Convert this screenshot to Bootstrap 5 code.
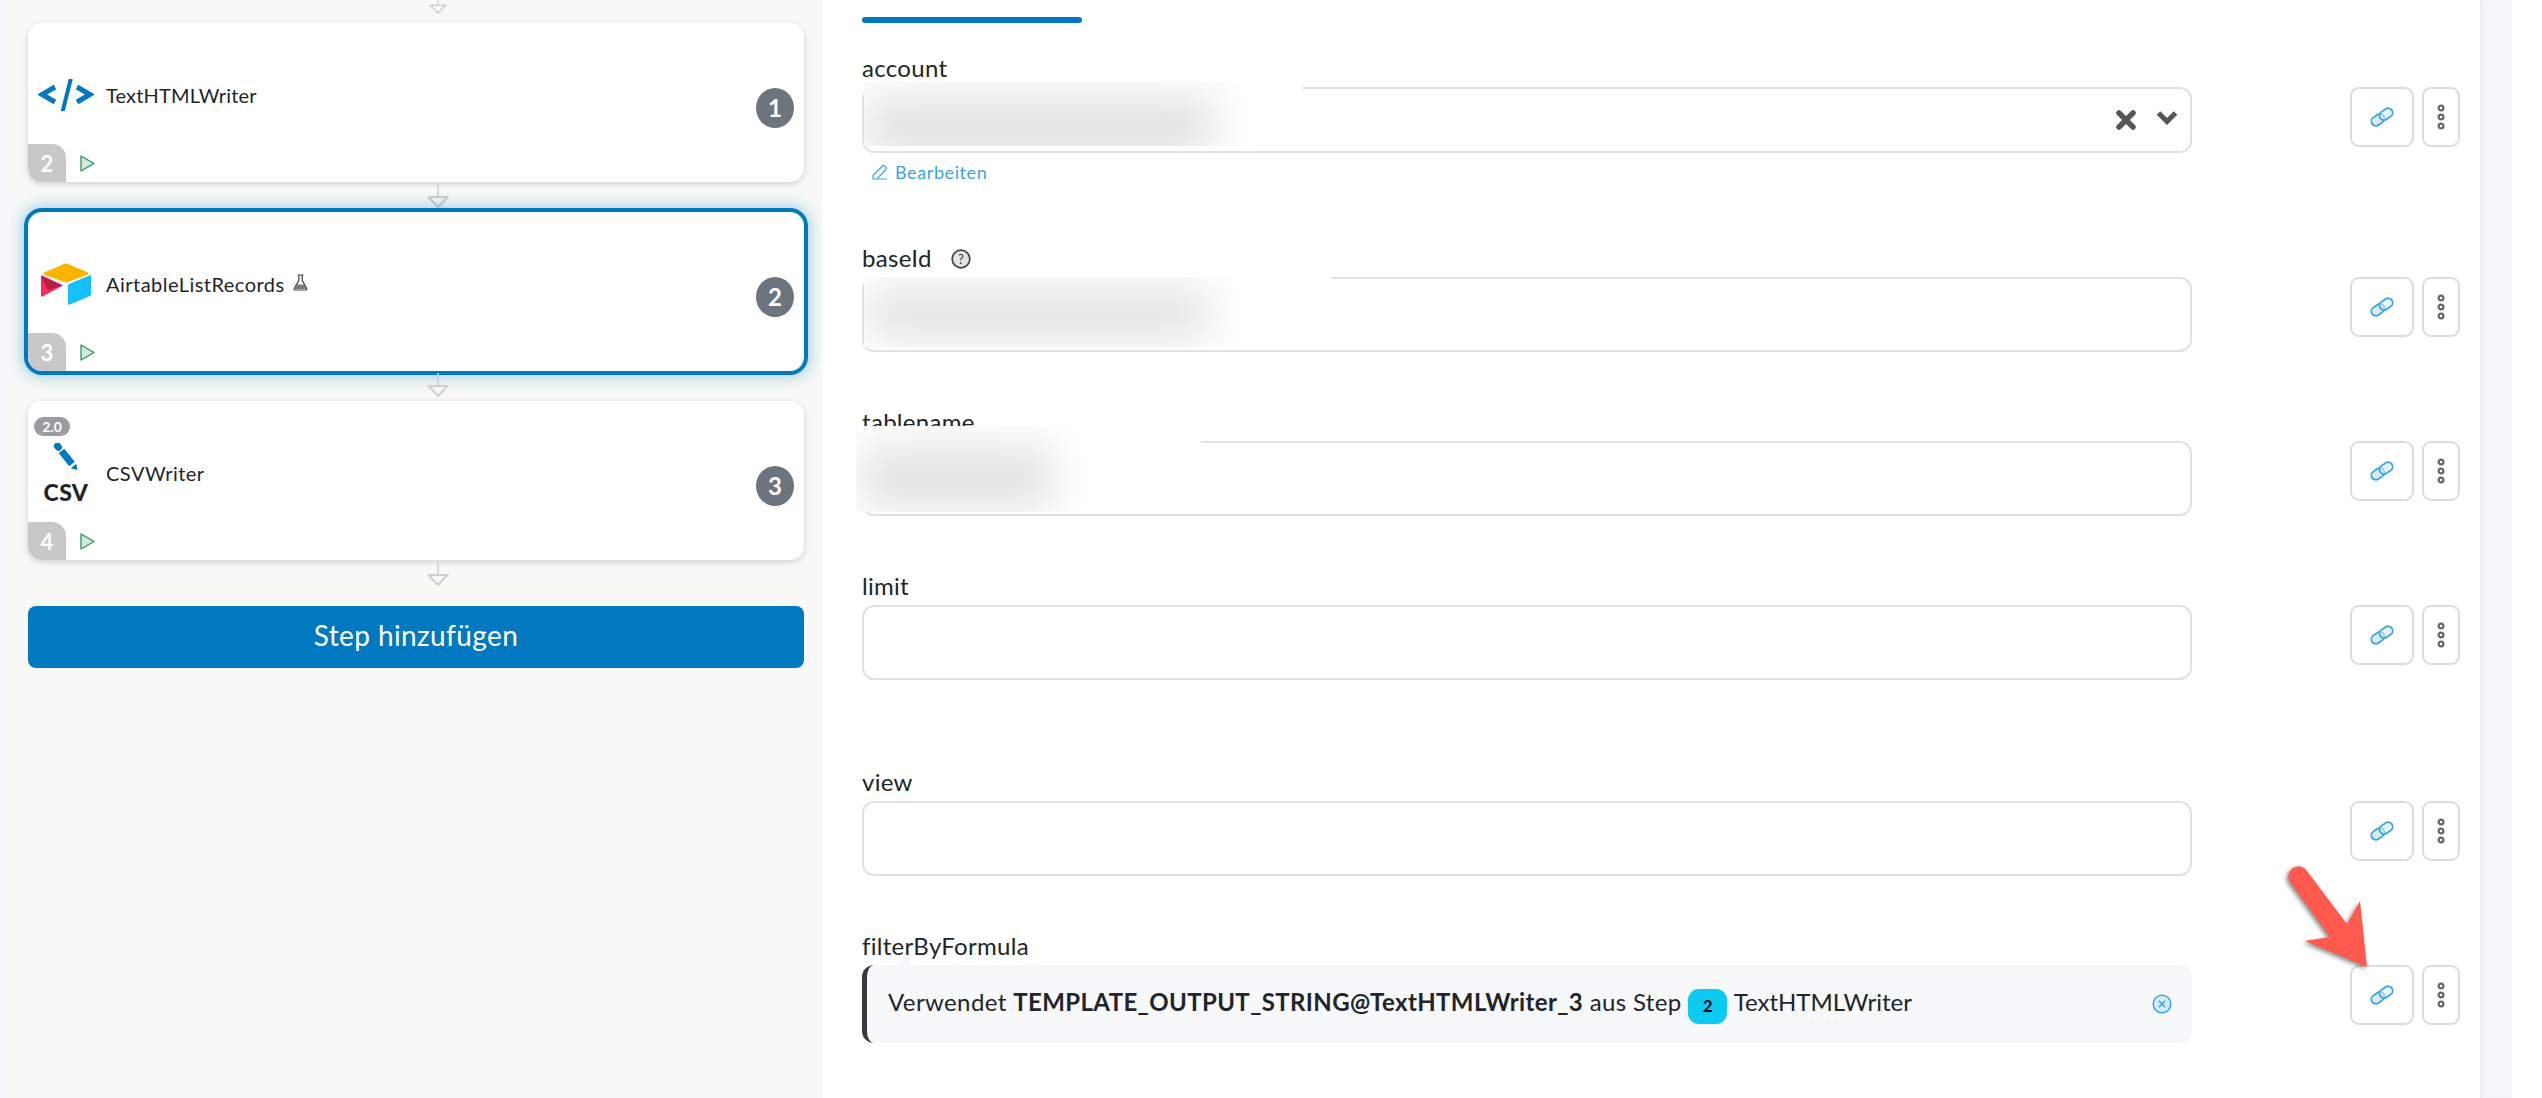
<!DOCTYPE html>
<html lang="de">
<head>
<meta charset="utf-8">
<title>Flow</title>
<link rel="stylesheet" href="https://cdn.jsdelivr.net/npm/bootstrap@5.3.0/dist/css/bootstrap.min.css">
<style>
html,body{height:1098px;overflow:hidden;}
body{font-family:"Lato","Noto Sans",sans-serif;color:#212529;background:#fff;position:relative;}
.shell{height:1098px;}
.strip-left{width:12px;background:#f7f8fb;}
.side-pane{width:810px;background:#f8f8f6;padding:0 18px 0 16px;}
.main-pane{flex:1 1 auto;background:#fff;padding:17px 20px 0 40px;}
.strip-right{width:32px;background:#f5f6f8;box-shadow:inset 5px 0 5px -3px #e9eaee;}
.strip-end{width:30px;background:#fff;}
.conn-top{height:23px;}
.conn{height:30px;padding-top:2px;}
.conn-last{height:46px;padding-top:2px;}
.conn-top svg,.conn svg,.conn-last svg{display:block;margin-left:auto;margin-right:auto;width:22px;height:24px;transform:translateX(22px);}
.conn-top svg{height:19px;}
.step-card{height:159px;background:#fff;border-radius:14px;box-shadow:0 2px 6px rgba(0,0,0,.16);position:relative;overflow:visible;}
.step-card.active-step{box-shadow:0 0 0 4px #0079c1,0 0 14px 7px rgba(0,121,193,.3);}
.step-main{height:121px;padding-top:23px;}
.icon-col{width:76px;flex:0 0 76px;margin-right:2px;}
.step-name{font-size:20px;letter-spacing:.15px;line-height:24px;}
.step-name.wide-name{letter-spacing:.47px;}
.step-foot{height:38px;}
.step-idx{width:38px;height:38px;background:#c8c8c8;color:#fff;font-weight:700;font-size:22px;border-radius:0 14px 0 14px;}
.play{width:15px;height:17px;margin-left:14px;}
.step-num{position:absolute;right:10px;top:65px;width:38px;height:40px;border-radius:50%;background:#6c757d;color:#fff;font-weight:700;font-size:24px;}
.ver-tag{position:absolute;left:6px;top:16px;width:36px;height:19px;border-radius:10px;background:#9a9ca1;color:#fff;font-size:14px;font-weight:700;line-height:19px;text-align:center;}
.csv-txt{font-weight:900;font-size:23px;line-height:22px;letter-spacing:.4px;margin-top:10px;}
.add-step{height:62px;background:#0079c1;border:0;border-radius:8px;font-size:28px;letter-spacing:.4px;line-height:58px;padding:0 0 4px;color:#fff;width:100%;}
.add-step:hover{background:#0079c1;color:#fff;}
.tab-bar{width:220px;height:6px;border-radius:3px;background:#0079c1;margin-bottom:30px;}
.fld-row{display:flex;align-items:flex-start;position:relative;}
.fld-col{width:1330px;flex:0 0 1330px;}
.fld-lbl{display:block;font-size:24px;letter-spacing:.3px;line-height:30px;margin:0 0 4px;}
.fld-box{border:2px solid #dee2e6;border-radius:12px;background:#fff;position:relative;}
.h66{height:66px;}
.h75{height:75px;}
.chev-i{margin:0 12px 4px 19px;}
.act-col{margin-left:auto;margin-top:34px;gap:8px;display:flex;}
.act-link{width:64px;height:60px;}
.act-more{width:38px;height:60px;}
.act-link,.act-more{border:2px solid #dcdcdc;border-radius:9px;background:#fff;padding:0;display:flex;align-items:center;justify-content:center;}
.gap-a{margin-bottom:50px;}
.gap-b{margin-bottom:55px;}
.gap-c{margin-bottom:87px;}
.edit-link{color:#39a5e0;text-decoration:none;font-size:18px;letter-spacing:.6px;line-height:24px;display:flex;align-items:center;gap:7px;padding:7px 0 9px 10px;height:40px;}
.help-i{margin-left:19px;vertical-align:-2px;}
.veil{position:absolute;background:#fff;overflow:hidden;}
.veil i{position:absolute;display:block;background:#e1e2e2;filter:blur(22px);}
.veil-a{left:0;top:-7px;width:439px;height:64px;}
.veil-a i{left:0;top:14px;width:350px;height:60px;}
.veil-b{left:0;top:-2px;width:467px;height:70px;}
.veil-b i{left:4px;top:12px;width:340px;height:50px;}
.veil-c{left:-8px;top:-17px;width:345px;height:86px;}
.veil-c i{left:6px;top:20px;width:190px;height:62px;}
.used-box{height:78px;background:#f7f8fa;border-left:5px solid #343a40;border-radius:12px;padding:0 20px 0 21px;position:relative;font-size:24px;letter-spacing:.38px;}
.used-box::before{content:"";position:absolute;left:30px;top:-8px;border:8px solid transparent;border-top:0;border-bottom-color:#f7f8fa;}
.used-num{display:inline-flex;width:39px;height:35px;background:#0dcaf0;color:#000;border-radius:11px;font-size:17px;font-weight:700;align-items:center;justify-content:center;margin:0;letter-spacing:0;vertical-align:-1px;}
.used-end{letter-spacing:0;}
.used-x{margin-left:auto;}
.pointer{position:absolute;left:2280px;top:860px;width:100px;height:115px;filter:drop-shadow(-2px 2px 2px rgba(0,0,0,.45));}
</style>
</head>
<body>
<svg width="0" height="0" class="position-absolute">
  <defs>
    <symbol id="ic-link" viewBox="0 0 26 22">
      <g transform="rotate(-35 13 11)" fill="#d8ebf7" stroke="#39a5e0" stroke-width="1.800">
        <rect x="1" y="6.500" width="14" height="9" rx="4.500"/>
        <rect x="11" y="6.500" width="14" height="9" rx="4.500" fill-opacity=".6"/>
      </g>
    </symbol>
    <symbol id="ic-dots" viewBox="0 0 10 26">
      <g fill="none" stroke="#666" stroke-width="2.200">
        <circle cx="5" cy="4" r="2.400"/><circle cx="5" cy="13" r="2.400"/><circle cx="5" cy="22" r="2.400"/>
      </g>
    </symbol>
    <symbol id="ic-play" viewBox="0 0 15 17">
      <path d="M1 1v15l13-7.500z" fill="#d3e9dc" stroke="#2f9560" stroke-width="1.300" stroke-linejoin="round"/>
    </symbol>
    <symbol id="ic-conn" viewBox="0 0 22 24">
      <path d="M11 0v13" stroke="#cfcfcf" stroke-width="1.600" fill="none"/>
      <path d="M1.500 13h19L11 23z" fill="none" stroke="#cfcfcf" stroke-width="2" stroke-linejoin="round"/>
    </symbol>
  </defs>
</svg>

<div class="shell d-flex">
  <div class="strip-left"></div>
  <div class="side-pane">
    <div class="conn-top"><svg viewBox="0 5 22 19"><use href="#ic-conn"/></svg></div>

    <div class="step-card">
      <div class="step-main d-flex align-items-center">
        <div class="icon-col d-flex justify-content-center">
          <svg width="56" height="32" viewBox="0 0 56 32">
            <path d="M17 8 4 15.500 17 23" fill="none" stroke="#0079c1" stroke-width="5"/>
            <path d="M39 8 52 15.500 39 23" fill="none" stroke="#0079c1" stroke-width="5"/>
            <path d="M32.500 1 25 31" fill="none" stroke="#0079c1" stroke-width="4" stroke-linecap="round"/>
          </svg>
        </div>
        <div class="step-name">TextHTMLWriter</div>
      </div>
      <div class="step-foot d-flex align-items-center">
        <div class="step-idx d-flex align-items-center justify-content-center">2</div>
        <svg class="play"><use href="#ic-play"/></svg>
      </div>
      <div class="step-num d-flex align-items-center justify-content-center">1</div>
    </div>
    <div class="conn"><svg><use href="#ic-conn"/></svg></div>

    <div class="step-card active-step">
      <div class="step-main d-flex align-items-center">
        <div class="icon-col d-flex justify-content-center">
          <svg width="50" height="42" viewBox="0 0 50 42">
            <path d="M23 1 3 9.500q-1 1 0 2L23 19q2 .8 4 0l20-7.500q1-1 0-2L27 1q-2-.8-4 0z" fill="#fcb400"/>
            <path d="M27 23v18q0 1 2 .5L49 33q1-.5 1-2V13q0-1-2-.5L28 21q-1 .5-1 2z" fill="#18bfff"/>
            <path d="M0 13v20q0 1 1.500 .5L22 22.500 1.500 12.600Q0 12 0 13z" fill="#f82b60"/>
            <path d="M0 13 22 22.500 7 27z" fill="#ba1e45"/>
          </svg>
        </div>
        <div class="step-name wide-name">AirtableListRecords</div>
        <svg class="ms-2 mb-1" width="15" height="17" viewBox="0 0 15 17">
          <path d="M4.500 1h6M5.800 1v5.500L1.300 14.200Q.6 16 2.500 16h10q1.900 0 1.200-1.800L9.200 6.500V1" fill="none" stroke="#444" stroke-width="1.200"/>
          <path d="M3.800 10.500h7.400l2 4.500H1.800z" fill="#7a7a7a"/>
        </svg>
      </div>
      <div class="step-foot d-flex align-items-center">
        <div class="step-idx d-flex align-items-center justify-content-center">3</div>
        <svg class="play"><use href="#ic-play"/></svg>
      </div>
      <div class="step-num d-flex align-items-center justify-content-center">2</div>
    </div>
    <div class="conn"><svg><use href="#ic-conn"/></svg></div>

    <div class="step-card">
      <div class="ver-tag">2.0</div>
      <div class="step-main d-flex align-items-center">
        <div class="icon-col d-flex flex-column align-items-center">
          <svg width="26" height="28" viewBox="0 0 26 28">
            <path d="M4.500 3 5.500 4.200" fill="none" stroke="#0079c1" stroke-width="7" stroke-linecap="round"/>
            <path d="M8.500 8 19 21" fill="none" stroke="#0079c1" stroke-width="7"/>
            <path d="M23.200 20.800 17.800 25.200 24.500 27z" fill="#0079c1"/>
          </svg>
          <div class="csv-txt">CSV</div>
        </div>
        <div class="step-name wide-name">CSVWriter</div>
      </div>
      <div class="step-foot d-flex align-items-center">
        <div class="step-idx d-flex align-items-center justify-content-center">4</div>
        <svg class="play"><use href="#ic-play"/></svg>
      </div>
      <div class="step-num d-flex align-items-center justify-content-center">3</div>
    </div>
    <div class="conn-last"><svg><use href="#ic-conn"/></svg></div>

    <button type="button" class="btn add-step">Step hinzufügen</button>
  </div>

  <div class="main-pane">
    <div class="tab-bar"></div>

    <div class="fld-row">
      <div class="fld-col">
        <label class="fld-lbl">account</label>
        <div class="fld-box h66 d-flex align-items-center justify-content-end">
          <div class="veil veil-a"><i></i></div>
          <svg width="22" height="22" viewBox="0 0 22 22"><path d="M4 4l14 14M18 4 4 18" stroke="#555" stroke-width="5.500" stroke-linecap="round"/></svg>
          <svg class="chev-i" width="22" height="16" viewBox="0 0 22 16"><path d="M2.500 3l8.500 8.500L19.500 3" fill="none" stroke="#555" stroke-width="5"/></svg>
        </div>
        <a class="edit-link" href="#">
          <svg width="16" height="16" viewBox="0 0 16 16"><path d="M1 15V11.500L10.500 2q1-1 2 0l1.500 1.500q1 1 0 2L5 15zM1 15h14" fill="none" stroke="#39a5e0" stroke-width="1.200"/></svg>
          Bearbeiten
        </a>
      </div>
      <div class="act-col">
        <button type="button" class="btn act-link"><svg width="26" height="22"><use href="#ic-link"/></svg></button>
        <button type="button" class="btn act-more"><svg width="10" height="26"><use href="#ic-dots"/></svg></button>
      </div>
    </div>
    <div class="gap-a"></div>

    <div class="fld-row gap-b">
      <div class="fld-col">
        <label class="fld-lbl">baseId<svg class="help-i" width="20" height="20" viewBox="0 0 20 20"><circle cx="10" cy="10" r="8.800" fill="#e4e4e4" stroke="#444" stroke-width="1.700"/><text x="10" y="14.500" text-anchor="middle" font-size="13" font-family="Lato,sans-serif" fill="#333">?</text></svg></label>
        <div class="fld-box h75"><div class="veil veil-b"><i></i></div></div>
      </div>
      <div class="act-col">
        <button type="button" class="btn act-link"><svg width="26" height="22"><use href="#ic-link"/></svg></button>
        <button type="button" class="btn act-more"><svg width="10" height="26"><use href="#ic-dots"/></svg></button>
      </div>
    </div>

    <div class="fld-row gap-b">
      <div class="fld-col">
        <label class="fld-lbl">tablename</label>
        <div class="fld-box h75"><div class="veil veil-c"><i></i></div></div>
      </div>
      <div class="act-col">
        <button type="button" class="btn act-link"><svg width="26" height="22"><use href="#ic-link"/></svg></button>
        <button type="button" class="btn act-more"><svg width="10" height="26"><use href="#ic-dots"/></svg></button>
      </div>
    </div>

    <div class="fld-row gap-c">
      <div class="fld-col">
        <label class="fld-lbl">limit</label>
        <div class="fld-box h75"></div>
      </div>
      <div class="act-col">
        <button type="button" class="btn act-link"><svg width="26" height="22"><use href="#ic-link"/></svg></button>
        <button type="button" class="btn act-more"><svg width="10" height="26"><use href="#ic-dots"/></svg></button>
      </div>
    </div>

    <div class="fld-row gap-b">
      <div class="fld-col">
        <label class="fld-lbl">view</label>
        <div class="fld-box h75"></div>
      </div>
      <div class="act-col">
        <button type="button" class="btn act-link"><svg width="26" height="22"><use href="#ic-link"/></svg></button>
        <button type="button" class="btn act-more"><svg width="10" height="26"><use href="#ic-dots"/></svg></button>
      </div>
    </div>

    <div class="fld-row">
      <div class="fld-col">
        <label class="fld-lbl">filterByFormula</label>
        <div class="used-box d-flex align-items-center">
          <span>Verwendet <strong>TEMPLATE_OUTPUT_STRING@TextHTMLWriter_3</strong> aus Step <span class="used-num">2</span> <span class="used-end">TextHTMLWriter</span></span>
          <svg class="used-x" width="20" height="20" viewBox="0 0 20 20"><circle cx="10" cy="10" r="8.800" fill="#d8ebf7" stroke="#39a5e0" stroke-width="1.500"/><path d="M6.800 6.800l6.400 6.400M13.200 6.800l-6.400 6.400" stroke="#39a5e0" stroke-width="1.500"/></svg>
        </div>
      </div>
      <div class="act-col">
        <button type="button" class="btn act-link"><svg width="26" height="22"><use href="#ic-link"/></svg></button>
        <button type="button" class="btn act-more"><svg width="10" height="26"><use href="#ic-dots"/></svg></button>
      </div>
    </div>
  </div>
  <div class="strip-right"></div>
  <div class="strip-end"></div>
</div>

<svg class="pointer" viewBox="0 0 100 115"><path d="M87 107 80 41 67 64 27 11A10 10 0 0 0 10 22L50 77 25 81Z" fill="#ff5a4d"/></svg>

<script src="https://cdn.jsdelivr.net/npm/bootstrap@5.3.0/dist/js/bootstrap.bundle.min.js"></script>
</body>
</html>
